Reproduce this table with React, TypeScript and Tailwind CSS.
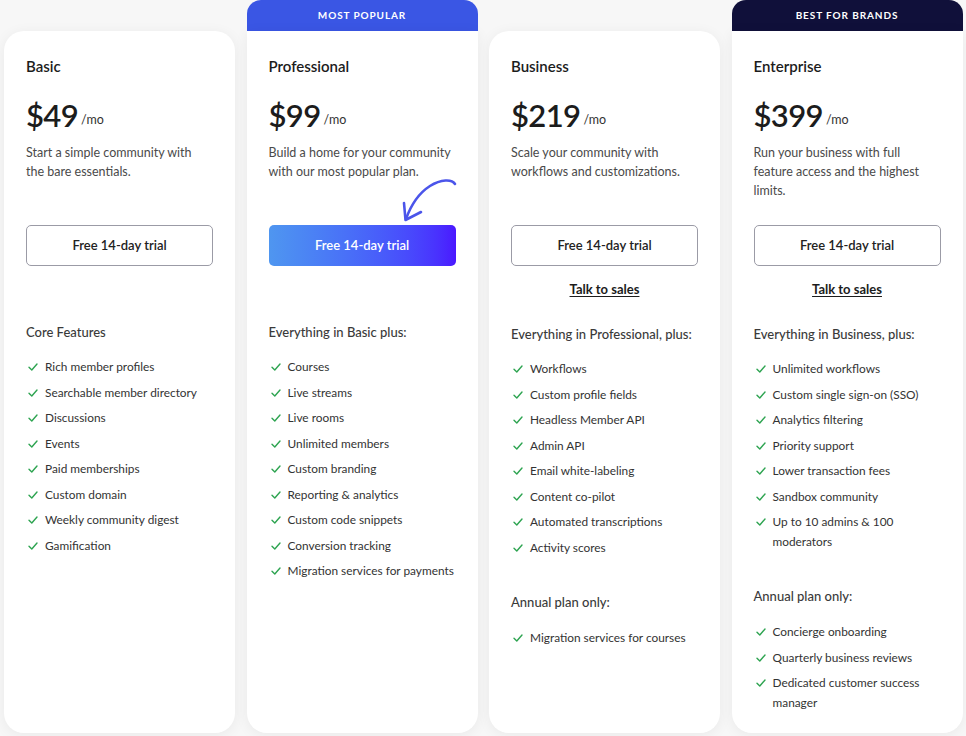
import * as React from "react"

type Plan = {
  name: string
  price: string
  desc: string
  primary?: boolean
  sales?: boolean
  nowrap?: boolean
  banner?: { text: string; className: string }
  heading: string
  features: string[]
  annual?: string[]
}

const plans: Plan[] = [
  {
    name: "Basic",
    price: "$49",
    desc: "Start a simple community with the bare essentials.",
    heading: "Core Features",
    features: [
      "Rich member profiles",
      "Searchable member directory",
      "Discussions",
      "Events",
      "Paid memberships",
      "Custom domain",
      "Weekly community digest",
      "Gamification",
    ],
  },
  {
    name: "Professional",
    price: "$99",
    desc: "Build a home for your community with our most popular plan.",
    primary: true,
    nowrap: true,
    banner: { text: "MOST POPULAR", className: "bg-[#3a56e4]" },
    heading: "Everything in Basic plus:",
    features: [
      "Courses",
      "Live streams",
      "Live rooms",
      "Unlimited members",
      "Custom branding",
      "Reporting & analytics",
      "Custom code snippets",
      "Conversion tracking",
      "Migration services for payments",
    ],
  },
  {
    name: "Business",
    price: "$219",
    desc: "Scale your community with workflows and customizations.",
    sales: true,
    heading: "Everything in Professional, plus:",
    features: [
      "Workflows",
      "Custom profile fields",
      "Headless Member API",
      "Admin API",
      "Email white-labeling",
      "Content co-pilot",
      "Automated transcriptions",
      "Activity scores",
    ],
    annual: ["Migration services for courses"],
  },
  {
    name: "Enterprise",
    price: "$399",
    desc: "Run your business with full feature access and the highest limits.",
    sales: true,
    banner: { text: "BEST FOR BRANDS", className: "bg-[#10103a]" },
    heading: "Everything in Business, plus:",
    features: [
      "Unlimited workflows",
      "Custom single sign-on (SSO)",
      "Analytics filtering",
      "Priority support",
      "Lower transaction fees",
      "Sandbox community",
      "Up to 10 admins & 100 moderators",
    ],
    annual: ["Concierge onboarding", "Quarterly business reviews", "Dedicated customer success manager"],
  },
]

const Check = () => (
  <svg width="10" height="8" viewBox="0 0 10 8" fill="none" className="mt-[6px] shrink-0">
    <path d="M1 4.2 L3.8 7 L9 1" stroke="#2ea451" strokeWidth="1.4" strokeLinecap="round" strokeLinejoin="round" />
  </svg>
)

const FeatureList = ({ items, nowrap }: { items: string[]; nowrap?: boolean }) => (
  <ul className="flex flex-col gap-[5.5px]">
    {items.map((f) => (
      <li key={f} className="flex gap-[7px] pl-[2px] text-[11.85px] leading-[20px] text-[#333333]">
        <Check />
        <span className={nowrap ? "whitespace-nowrap" : ""}>{f}</span>
      </li>
    ))}
  </ul>
)

// hand drawn arrow pointing at the main button
const Arrow = () => (
  <svg
    width="64"
    height="56"
    viewBox="0 0 64 56"
    fill="none"
    className="absolute left-[150px] top-[142px]"
  >
    <path
      d="M58 11 C55 6, 44 6, 33 13 C22 20, 14 32, 9 46"
      stroke="#4b55ea"
      strokeWidth="2.6"
      strokeLinecap="round"
    />
    <path d="M7 30 L8.5 47 L24 39" stroke="#4b55ea" strokeWidth="2.6" strokeLinecap="round" strokeLinejoin="round" />
  </svg>
)

const Card = ({ plan }: { plan: Plan }) => {
  return (
    <div className="flex w-[231px] shrink-0 flex-col">
      {plan.banner ? (
        <div
          className={`flex h-[31px] items-center justify-center rounded-t-[14px] text-[10px] font-bold tracking-[0.09em] text-white ${plan.banner.className}`}
        >
          {plan.banner.text}
        </div>
      ) : (
        <div className="h-[31px]" />
      )}
      <div
        className={`relative flex h-[702px] flex-col bg-white px-[22px] pt-[25px] shadow-[0_2px_14px_rgba(0,0,0,0.06)] ${
          plan.banner ? "rounded-b-[20px]" : "rounded-[20px]"
        }`}
      >
        {plan.primary && <Arrow />}
        <h3 className="text-[15px] font-semibold leading-[20px] text-[#1c1c1c]">{plan.name}</h3>
        <div className="mt-[21px] flex h-[36px] items-end gap-[3px] text-[#1c1c1c]">
          <span className="text-[31px] font-semibold leading-[36px] tracking-[-0.02em]">{plan.price}</span>
          <span className="pb-[5px] text-[12.5px] leading-[16px] text-[#333]">/mo</span>
        </div>
        <p className="mt-[10px] h-[82px] pr-[2px] text-[12.5px] leading-[19px] text-[#4a4a4a]">{plan.desc}</p>
        {plan.primary ? (
          <button className="h-[41px] w-full rounded-[5px] bg-gradient-to-r from-[#4f96f0] to-[#4a16ff] text-[13px] font-semibold text-white">
            Free 14-day trial
          </button>
        ) : (
          <button className="h-[41px] w-full rounded-[5px] border border-[#9b9ba6] bg-white text-[13px] font-semibold text-[#222]">
            Free 14-day trial
          </button>
        )}
        <div className="h-[57px] pt-[10px] text-center">
          {plan.sales && (
            <a className="text-[13px] font-bold leading-[18px] text-[#1c1c1c] underline underline-offset-2">
              Talk to sales
            </a>
          )}
        </div>
        <h4
          className={`whitespace-nowrap text-[13px] font-medium leading-[18px] text-[#3a3a3a] ${plan.sales ? "mt-[2px]" : ""}`}
        >
          {plan.heading}
        </h4>
        <div className="mt-[16px]">
          <FeatureList items={plan.features} nowrap={plan.nowrap} />
        </div>
        {plan.annual && (
          <>
            <h4 className="mt-[35px] text-[13px] font-medium leading-[18px] text-[#3a3a3a]">
              Annual plan only:
            </h4>
            <div className="mt-[17px]">
              <FeatureList items={plan.annual} />
            </div>
          </>
        )}
      </div>
    </div>
  )
}

const App = () => {
  return (
    <div className="flex h-[736px] w-[966px] gap-[11.5px] overflow-hidden bg-[#f7f7f7] pl-[4px] font-['Lato',sans-serif]">
      {plans.map((p) => (
        <Card key={p.name} plan={p} />
      ))}
    </div>
  )
}

export default App
